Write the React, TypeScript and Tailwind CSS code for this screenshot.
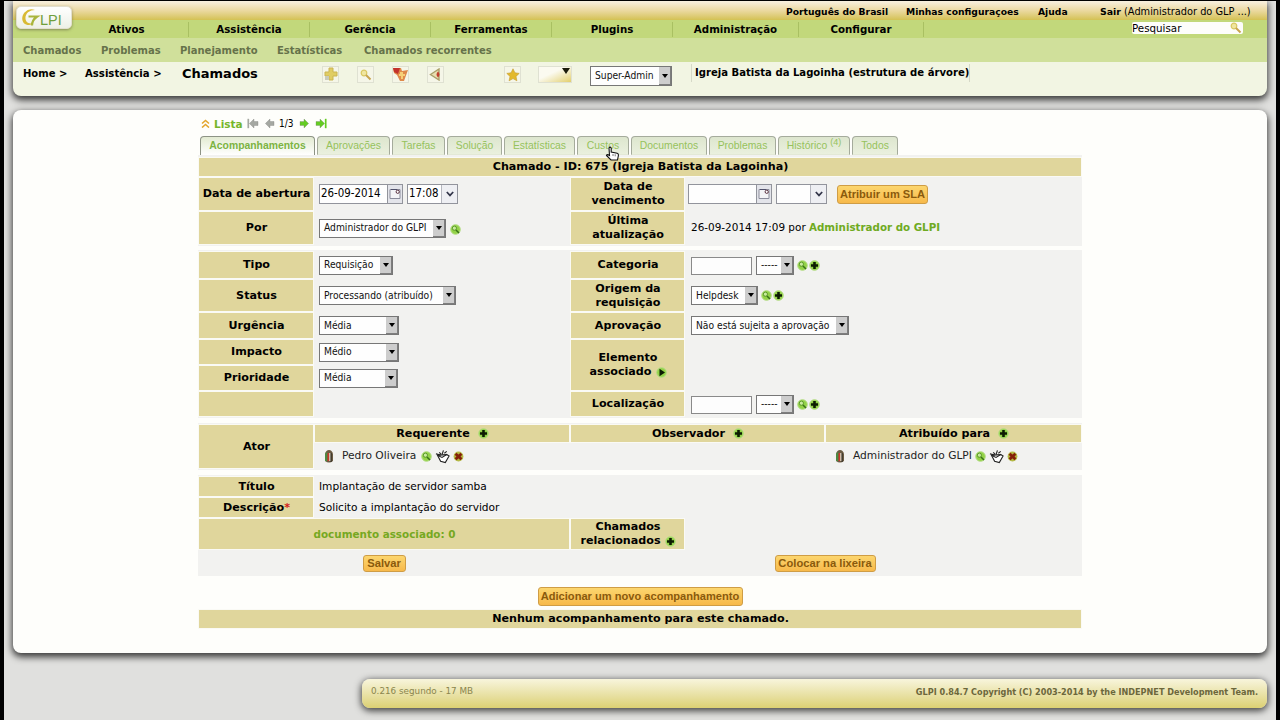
import type { ReactNode } from 'react';

type Item = { label: string; className: string };

const TOP_LINKS: Item[] = [
  { label: 'Português do Brasil', className: 'w-[120px]' },
  { label: 'Minhas configuraçoes', className: 'w-[132px]' },
  { label: 'Ajuda', className: 'w-[62px]' },
];

const MENU: Item[] = [
  { label: 'Ativos', className: 'w-[124px]' },
  { label: 'Assistência', className: 'w-[121px]' },
  { label: 'Gerência', className: 'w-[121px]' },
  { label: 'Ferramentas', className: 'w-[121px]' },
  { label: 'Plugins', className: 'w-[121px]' },
  { label: 'Administração', className: 'w-[126px]' },
  { label: 'Configurar', className: 'w-[125px]' },
];

const SUBMENU: Item[] = [
  { label: 'Chamados', className: 'w-[78px]' },
  { label: 'Problemas', className: 'w-[79px]' },
  { label: 'Planejamento', className: 'w-[97px]' },
  { label: 'Estatísticas', className: 'w-[87px]' },
  { label: 'Chamados recorrentes', className: 'w-[140px]' },
];

const TABS: Item[] = [
  { label: 'Aprovações', className: 'w-[73px]' },
  { label: 'Tarefas', className: 'w-[53px]' },
  { label: 'Solução', className: 'w-[55px]' },
  { label: 'Estatísticas', className: 'w-[71px]' },
  { label: 'Custos', className: 'w-[52px]' },
  { label: 'Documentos', className: 'w-[76px]' },
  { label: 'Problemas', className: 'w-[67px]' },
  { label: 'Histórico', className: 'w-[72px]' },
  { label: 'Todos', className: 'w-[46px]' },
];

function Disc({ children }: { children: ReactNode }) {
  return (
    <svg className="h-[11px] w-[11px] shrink-0" viewBox="0 0 11 11" fill="none" aria-hidden>
      <circle cx="5.5" cy="5.5" r="4.8" fill="#93d247" stroke="#b3dc84" />
      {children}
    </svg>
  );
}

function PlusIcon() {
  return (
    <Disc>
      <path d="M5.5 2v7M2 5.5h7" stroke="#0c1c02" strokeWidth="2.6" />
    </Disc>
  );
}

function LookIcon() {
  return (
    <Disc>
      <circle cx="4.4" cy="4.2" r="2.1" fill="#c9ea9d" stroke="#5a9a28" />
      <path d="m6 6 3 3" stroke="#3a7218" strokeWidth="1.5" />
    </Disc>
  );
}

function PlayIcon() {
  return (
    <Disc>
      <path d="M3.500 1.800v7.400L9 5.500z" fill="#0c1c02" />
    </Disc>
  );
}

function DeleteIcon() {
  return (
    <svg className="h-[11px] w-[11px] shrink-0" viewBox="0 0 11 11" fill="none" aria-hidden>
      <circle cx="5.5" cy="5.5" r="4.9" fill="#b4b944" />
      <path d="m2.600 2.800 5.800 5.400M8.400 2.800 2.600 8.200" stroke="#85200a" strokeWidth="2.800" />
    </svg>
  );
}

function PersonIcon() {
  return (
    <svg className="h-[14px] w-[10px] shrink-0" viewBox="0 0 10 14" aria-hidden>
      <path d="M1 5q1-4 4-4t4 4v7q-4 3-8 0z" fill="#6b5b42" />
      <path d="M1 5q1-2 2.500-2v9H1z" fill="#4c8a42" />
      <path d="M3.500 4h1.800v8H3.500z" fill="#c9372a" />
      <path d="M5.300 4h1.300v8H5.300z" fill="#f3e9d6" />
      <path d="M6.600 4h1v9h-1z" fill="#2c2a24" />
    </svg>
  );
}

function MailIcon() {
  return (
    <svg className="h-[15px] w-[15px] shrink-0" viewBox="0 0 16 15" fill="none" stroke="#222" strokeWidth="1.200" aria-hidden>
      <path d="m2.500 6 3.500 6.500 5 1.500 4-7-2.500-1.500L4 6z" fill="#fff" />
      <path d="m3 6.500 4.500 2L13 5M1 4.500l5 1.500M9 1 7.500 5.500M10 4l2.500-2M4.500 3l2 2" />
    </svg>
  );
}

function CalendarIcon() {
  return (
    <svg className="h-[12px] w-[12px]" viewBox="0 0 12 12" fill="none" aria-hidden>
      <path d="M1 1.500h10v9H1z" fill="#f4f4f6" stroke="#8b8c9b" />
      <path d="M2 1.500h6" stroke="#4f506a" />
      <circle cx="8.700" cy="3.800" r="1.600" fill="#fff" stroke="#5a3140" />
    </svg>
  );
}

function ArrowIcon({ flip, bar, color }: { flip?: boolean; bar?: boolean; color: string }) {
  return (
    <svg className={`h-[11px] w-[12px] shrink-0 ${flip ? '-scale-x-100' : ''}`} viewBox="0 0 12 11" aria-hidden>
      <path d="M1 3.500h4V1l4.600 4.500L5 10V7.500H1z" fill={color} stroke="#777" strokeOpacity=".45" strokeWidth=".7" />
      {bar && <path d="M10.700.8v9.400" stroke={color} strokeWidth="1.700" />}
    </svg>
  );
}

function Select({ value, className }: { value: string; className: string }) {
  return (
    <div
      className={`flex shrink-0 items-stretch border border-[#777] bg-[#fefefe] font-['DejaVu_Sans_Condensed','DejaVu_Sans',sans-serif] text-[10.2px] text-[#111] ${className}`}
    >
      <span className="flex flex-1 items-center pl-1 whitespace-nowrap">{value}</span>
      <span className="flex w-3 items-center justify-center border-r border-b border-[#7d7d7d] bg-[#cdcdcd]">
        <svg className="h-1 w-[6px]" viewBox="0 0 6 4" aria-hidden>
          <path d="M0 0h6L3 4z" fill="#000" />
        </svg>
      </span>
    </div>
  );
}

function DateField({ value, className }: { value?: string; className: string }) {
  return (
    <div
      className={`flex h-[20px] border border-[#92949c] bg-[#fefefe] font-['DejaVu_Sans_Condensed','DejaVu_Sans',sans-serif] text-[11.4px] ${className}`}
    >
      <span className="flex flex-1 items-center pl-px whitespace-nowrap">{value}</span>
      <span className="flex w-[15px] items-center justify-center border-l border-[#92949c] bg-[#e3e4ea]">
        <CalendarIcon />
      </span>
    </div>
  );
}

function TimeField({ value, className }: { value?: string; className: string }) {
  return (
    <div
      className={`flex h-[20px] border border-[#92949c] bg-[#fefefe] font-['DejaVu_Sans_Condensed','DejaVu_Sans',sans-serif] text-[11.4px] ${className}`}
    >
      <span className="flex flex-1 items-center pl-px whitespace-nowrap">{value}</span>
      <span className="flex w-4 items-center justify-center border-l border-[#b4b6be] bg-[#eeeff3]">
        <svg className="h-[6px] w-2" viewBox="0 0 8 6" fill="none" aria-hidden>
          <path d="m.8 1 3.200 3.400L7.200 1" stroke="#33364a" strokeWidth="1.700" />
        </svg>
      </span>
    </div>
  );
}

function Button({ children, className }: { children: ReactNode; className: string }) {
  return (
    <button
      type="button"
      className={`flex shrink-0 items-center justify-center rounded-[3px] border border-[#cf9d45] bg-linear-to-b from-[#fcd66e] to-[#f7b94a] font-['Liberation_Sans',sans-serif] font-bold whitespace-nowrap text-[#8a5a0c] ${className}`}
    >
      {children}
    </button>
  );
}

function Label({ children, className = '' }: { children?: ReactNode; className?: string }) {
  return (
    <div
      className={`flex items-center justify-center bg-[#e0d69c] pl-px text-center text-[11.15px] leading-[14px] font-bold shadow-[0_0_0_1px_#fafaf5] ${className}`}
    >
      {children}
    </div>
  );
}

function Value({ children, className = 'pl-1' }: { children?: ReactNode; className?: string }) {
  return <div className={`flex items-center ${className}`}>{children}</div>;
}

function Picker() {
  return (
    <>
      <div className="mt-px h-[18px] w-[61px] border border-[#8a8a8a] bg-[#fdfdfd]" />
      <Select value="-----" className="ml-1 h-[19px] w-[38px]" />
      <span className="ml-[3px] flex gap-px">
        <LookIcon />
        <PlusIcon />
      </span>
    </>
  );
}

function Actor({ name, className }: { name: string; className: string }) {
  return (
    <div className="flex items-center pl-[9px]">
      <PersonIcon />
      <span className={`ml-2 text-[10.65px] whitespace-nowrap text-[#222] ${className}`}>{name}</span>
      <LookIcon />
      <span className="ml-[3px]">
        <MailIcon />
      </span>
      <span className="ml-[3px]">
        <DeleteIcon />
      </span>
    </div>
  );
}

function ToolBox({ children, className }: { children: ReactNode; className: string }) {
  return (
    <span className={`flex h-[17px] w-[17px] items-center justify-center border border-[#dfe1d2] bg-[#f5f6e8] ${className}`}>
      {children}
    </span>
  );
}

function SearchGlyph() {
  return (
    <svg className="h-3 w-3" viewBox="0 0 12 12" fill="none" aria-hidden>
      <circle cx="4" cy="4" r="2.800" fill="#f0e6a0" stroke="#d9c862" strokeWidth="1.200" />
      <path d="m6 6 4.500 4.500" stroke="#c8a44e" strokeWidth="2" />
    </svg>
  );
}

function Logo() {
  return (
    <div className="absolute top-[5px] left-[3px] h-[23px] w-[56px] rounded-[5px] border border-[#e2dfcf] bg-linear-to-b from-white to-[#edf0e6] shadow-[0_1px_3px_rgba(90,90,60,0.6)]">
      <svg className="absolute top-px left-[3px] h-[19px] w-[21px]" viewBox="0 0 21 19" fill="none" aria-hidden>
        <path d="M15 2Q9-.5 4.500 4.500C0 10 2.500 17 9 17q2.500 0 4-2-2.500.8-4.600 0C4.500 13 4.500 7.500 8 4.300Q11 2 15 2Z" fill="#d9ba34" />
        <path d="M8.500 8.500h8.700Q12 12 12 17.500" stroke="#a9b53c" strokeWidth="2.200" />
      </svg>
      <span className="absolute top-[6px] left-[23px] font-['Liberation_Sans',sans-serif] text-[14.5px] leading-[15px] text-[#6f9f3c]">
        LPI
      </span>
    </div>
  );
}

function Header() {
  return (
    <header className="relative h-[95px] overflow-visible rounded-b-lg bg-[#f2f5e3] shadow-[0_3px_7px_1px_rgba(0,0,0,0.75)]">
      <div className="flex h-[19px] items-center justify-end bg-linear-to-b from-[#f8f0e0] via-[#ebd9a0] to-[#d4c252] pt-[3px] text-[9.2px] whitespace-nowrap">
        {TOP_LINKS.map((link) => (
          <span key={link.label} className={`shrink-0 font-bold ${link.className}`}>
            {link.label}
          </span>
        ))}
        <span className="w-[167px] shrink-0 text-[9.8px]">
          <b className="text-[9.4px]">Sair</b> (Administrador do GLP ...)
        </span>
      </div>
      <div className="flex h-[18px] items-center bg-[#c2d87b] pl-[52px] text-[10.25px] font-bold">
        {MENU.map((item) => (
          <span
            key={item.label}
            className={`flex h-[15px] shrink-0 items-center justify-center border-r border-[#a9c062] pt-0.5 ${item.className}`}
          >
            {item.label}
          </span>
        ))}
        <div className="-mt-0.5 mr-6 ml-auto flex h-3 w-[111px] items-center justify-between rounded-xs bg-[#fdfdfb] pr-px text-[10.3px] font-normal">
          <span className="pt-0.5">Pesquisar</span>
          <SearchGlyph />
        </div>
      </div>
      <div className="flex h-6 items-center bg-[#d0e09b] pl-[10px] text-[10px] font-bold text-[#66724a]">
        {SUBMENU.map((item) => (
          <span key={item.label} className={`shrink-0 whitespace-nowrap ${item.className}`}>
            {item.label}
          </span>
        ))}
      </div>
      <div className="flex h-[34px] items-start pt-[3px] pl-[10px] font-bold whitespace-nowrap">
        <span className="mt-px w-[62px] text-[10px]">Home &gt;</span>
        <span className="mt-px w-[97px] text-[10.15px]">Assistência &gt;</span>
        <span className="-mt-px w-[140px] text-[13px] leading-[19px]">Chamados</span>
        <ToolBox className="mt-px">
          <svg className="h-[15px] w-[15px]" viewBox="0 0 15 15" aria-hidden>
            <path d="M6 1h4v4h4v4h-4v4H6V9H2V5h4z" fill="#e0cd63" stroke="#cbb552" />
            <path d="M2 9h4v4H2z" fill="#c9cbb9" />
          </svg>
        </ToolBox>
        <ToolBox className="mt-px ml-[18px]">
          <SearchGlyph />
        </ToolBox>
        <ToolBox className="mt-px ml-[18px]">
          <svg className="h-[15px] w-[15px]" viewBox="0 0 15 15" aria-hidden>
            <path d="M0 1h8l1 3 6-1-4 11H7L4 8 1 6z" fill="#df8a4a" />
            <path d="M0 1h7l-2 6-4-2z" fill="#c3322c" />
            <path d="M7 5h3v2h2v2h-2v3H8V9H6V7h1z" fill="#f7cf76" />
          </svg>
        </ToolBox>
        <ToolBox className="mt-px ml-[18px]">
          <svg className="h-[13px] w-[13px]" viewBox="0 0 13 13" aria-hidden>
            <path d="m1.500 6.500 8.500-5.500v11z" fill="#e9dfb0" stroke="#aaa06a" strokeWidth="1.400" />
            <path d="M9 3.500q3 3 0 6-3-3 0-6z" fill="#bf3f2c" />
          </svg>
        </ToolBox>
        <ToolBox className="mt-px ml-[60px]">
          <svg className="h-[14px] w-[14px]" viewBox="0 0 14 14" aria-hidden>
            <path d="m7 .8 1.900 4 4.300.6-3.200 3 .9 4.400L7 10.600l-3.900 2.200.9-4.400-3.200-3 4.300-.6z" fill="#e3b92c" stroke="#c49b2b" strokeWidth=".6" />
          </svg>
        </ToolBox>
        <span className="mt-px ml-[17px] flex h-[17px] w-[34px] justify-end border border-[#dfe1d2] bg-linear-to-br from-[#fbfaf0] from-40% to-[#e3cf6a] pt-px">
          <svg className="mr-px h-[6px] w-[8px]" viewBox="0 0 8 6" aria-hidden>
            <path d="M0 0h8L4 6z" fill="#1b1b0c" />
          </svg>
        </span>
        <Select value="Super-Admin" className="mt-px ml-[18px] h-[20px] w-[82px] font-normal" />
        <span className="-mt-px ml-[19px] flex h-[18px] w-[279px] items-center border-x border-[#d6d9c8] pl-[3px] text-[10.08px]">
          Igreja Batista da Lagoinha (estrutura de árvore)
        </span>
      </div>
      <Logo />
    </header>
  );
}

function Pager() {
  return (
    <div className="flex h-[26px] items-center gap-1 pl-[3px] text-[10px]">
      <svg className="h-[9px] w-[9px]" viewBox="0 0 9 9" fill="none" stroke="#e3a62e" strokeWidth="1.600" aria-hidden>
        <path d="m1 4.500 3.500-3 3.500 3M1 8.500l3.500-3 3.500 3" />
      </svg>
      <span className="mt-[3px] w-[29px] text-[10.5px] font-bold text-[#76b62a]">Lista</span>
      <ArrowIcon flip bar color="#a5a8a2" />
      <ArrowIcon flip color="#a5a8a2" />
      <span className="mt-px w-[16px] font-['DejaVu_Sans_Condensed','DejaVu_Sans',sans-serif]">1/3</span>
      <ArrowIcon color="#64cc22" />
      <ArrowIcon bar color="#64cc22" />
    </div>
  );
}

function Tabs() {
  return (
    <div className="flex h-[19px] gap-[2px] pl-[2px] font-['Liberation_Sans',sans-serif] text-[10.4px]">
      <div className="flex w-[115px] shrink-0 items-center justify-center rounded-t-[4px] border border-b-0 border-[#8d9385] bg-linear-to-b from-[#e3ebd2] to-white pb-px font-bold text-[#7cb342]">
        Acompanhamentos
      </div>
      {TABS.map((tab) => (
        <div
          key={tab.label}
          className={`flex shrink-0 items-center justify-center rounded-t-[4px] border border-[#a5ab9c] border-b-[#e3e9d6] bg-linear-to-b from-[#dde6ce] to-[#eaf0de] whitespace-nowrap text-[#96c25c] ${tab.className}`}
        >
          {tab.label}
          {tab.label === 'Histórico' && <span className="-mt-1.5 ml-[3px] text-[9px]">(4)</span>}
        </div>
      ))}
    </div>
  );
}

function HandCursor() {
  return (
    <svg className="absolute top-[146px] left-[605px] h-[15px] w-[15px]" viewBox="0 0 15 15" aria-hidden>
      <path
        d="M4 2Q5 .3 6.200 2v4l6 1.200q1.500.5 1.200 2.300L12.500 14H6L1.500 9.500q.5-1.700 3 0z"
        fill="#fff"
        stroke="#111"
        strokeWidth="1.100"
      />
      <path d="M8 8v2M10.200 8.300v2" stroke="#555" strokeWidth=".8" />
    </svg>
  );
}

function Ticket() {
  return (
    <>
      <div className="grid grid-cols-[114px_254px_113px_395px] grid-rows-[18px_32px_32px] gap-[2px] bg-[#f2f2f0] px-px pt-[3px] pb-[2px]">
        <Label className="col-span-4">Chamado - ID: 675 (Igreja Batista da Lagoinha)</Label>
        <Label>Data de abertura</Label>
        <Value>
          <DateField value="26-09-2014" className="w-[84px]" />
          <TimeField value="17:08" className="ml-1 w-[51px]" />
        </Value>
        <Label>
          Data de
          <br />
          vencimento
        </Label>
        <Value className="pl-[2px]">
          <DateField className="w-[84px]" />
          <TimeField className="ml-1 w-[51px]" />
          <Button className="ml-[10px] h-[19px] w-[91px] text-[11.1px]">Atribuir um SLA</Button>
        </Value>
        <Label>Por</Label>
        <Value>
          <Select value="Administrador do GLPI" className="h-[19px] w-[127px]" />
          <span className="mt-0.5 ml-1">
            <LookIcon />
          </span>
        </Value>
        <Label>
          Última
          <br />
          atualização
        </Label>
        <Value className="pl-[5px] text-[10.45px] whitespace-pre">
          26-09-2014 17:09 por <b className="text-[10.3px] font-bold text-[#6faa22]">Administrador do GLPI</b>
        </Value>
      </div>

      <div className="mt-1 grid grid-cols-[114px_254px_113px_395px] grid-rows-[26px_31px_25px_24px_24px_24px] gap-[2px] bg-[#f2f2f0] px-px py-[2px]">
        <Label>Tipo</Label>
        <Value>
          <Select value="Requisição" className="h-[19px] w-[74px]" />
        </Value>
        <Label>Categoria</Label>
        <Value className="pl-[5px]">
          <Picker />
        </Value>
        <Label>Status</Label>
        <Value>
          <Select value="Processando (atribuído)" className="h-[19px] w-[137px]" />
        </Value>
        <Label>
          Origem da
          <br />
          requisição
        </Label>
        <Value className="pl-[5px]">
          <Select value="Helpdesk" className="h-[19px] w-[67px]" />
          <span className="ml-[3px] flex gap-px">
            <LookIcon />
            <PlusIcon />
          </span>
        </Value>
        <Label>Urgência</Label>
        <Value>
          <Select value="Média" className="h-[19px] w-[80px]" />
        </Value>
        <Label>Aprovação</Label>
        <Value className="pl-[5px]">
          <Select value="Não está sujeita a aprovação" className="h-[19px] w-[158px]" />
        </Value>
        <Label>Impacto</Label>
        <Value>
          <Select value="Médio" className="h-[19px] w-[80px]" />
        </Value>
        <Label className="row-span-2">
          <div>
            Elemento
            <div className="flex items-center gap-1">
              associado
              <PlayIcon />
            </div>
          </div>
        </Label>
        <Value className="row-span-2" />
        <Label>Prioridade</Label>
        <Value>
          <Select value="Média" className="h-[19px] w-[79px]" />
        </Value>
        <Label />
        <Value />
        <Label>Localização</Label>
        <Value className="pl-[5px]">
          <Picker />
        </Value>
      </div>

      <div className="mt-[5px] grid grid-cols-[114px_254px_253px_255px] grid-rows-[17px_24px] gap-[2px] bg-[#f2f2f0] px-px py-[2px]">
        <Label className="row-span-2">Ator</Label>
        <Label className="gap-2">
          Requerente <PlusIcon />
        </Label>
        <Label className="gap-2">
          Observador <PlusIcon />
        </Label>
        <Label className="gap-2">
          Atribuído para <PlusIcon />
        </Label>
        <Actor name="Pedro Oliveira" className="w-[79px]" />
        <div />
        <Actor name="Administrador do GLPI" className="w-[122px]" />
      </div>

      <div className="mt-[5px] grid grid-cols-[114px_254px_113px_395px] grid-rows-[19px_19px_30px_25px] gap-[2px] bg-[#f2f2f0] px-px pt-[2px]">
        <Label>Título</Label>
        <Value className="col-span-3 pl-1 text-[10.6px]">Implantação de servidor samba</Value>
        <Label>
          Descrição<span className="text-[#d3201c]">*</span>
        </Label>
        <Value className="col-span-3 pl-1 text-[10.6px]">Solicito a implantação do servidor</Value>
        <Label className="col-span-2 text-[10.4px]! text-[#76a822]">documento associado: 0</Label>
        <Label>
          <div>
            Chamados
            <div className="flex items-center gap-1">
              relacionados
              <PlusIcon />
            </div>
          </div>
        </Label>
        <div />
        <div className="col-span-2 flex items-center justify-center">
          <Button className="h-[17px] w-[43px] text-[11.2px]">Salvar</Button>
        </div>
        <div className="col-span-2 flex items-center justify-center pr-[2px]">
          <Button className="h-[17px] w-[101px] text-[11.2px]">Colocar na lixeira</Button>
        </div>
      </div>

      <div className="flex justify-center pt-[11px] pb-1">
        <Button className="h-[19px] w-[205px] text-[11.1px]">Adicionar um novo acompanhamento</Button>
      </div>
      <Label className="mx-px h-[18px]">Nenhum acompanhamento para este chamado.</Label>
    </>
  );
}

export default function App() {
  return (
    <div className="h-[720px] w-[1280px] overflow-hidden bg-black px-1 pt-px font-['DejaVu_Sans',sans-serif] text-black">
      <div className="h-full overflow-hidden bg-[#e0e0de] px-[9px]">
        <Header />
        <main className="mt-[14px] h-[543px] rounded-lg bg-[#fefefb] shadow-[0_3px_7px_1px_rgba(0,0,0,0.75)]">
          <div className="ml-[185px] w-[884px]">
            <Pager />
            <Tabs />
            <Ticket />
          </div>
        </main>
        <footer className="mt-[26px] ml-[349px] flex h-[29px] items-center justify-between rounded-lg bg-linear-to-b from-[#f8f5dc] to-[#dcd072] px-[9px] pb-[3px] text-[8.8px] text-[#8a854e] shadow-[0_2px_7px_1px_rgba(0,0,0,0.7)]">
          <span>0.216 segundo - 17 MB</span>
          <span className="text-[8.15px] font-bold text-[#6c673c]">
            GLPI 0.84.7 Copyright (C) 2003-2014 by the INDEPNET Development Team.
          </span>
        </footer>
      </div>
      <HandCursor />
    </div>
  );
}
